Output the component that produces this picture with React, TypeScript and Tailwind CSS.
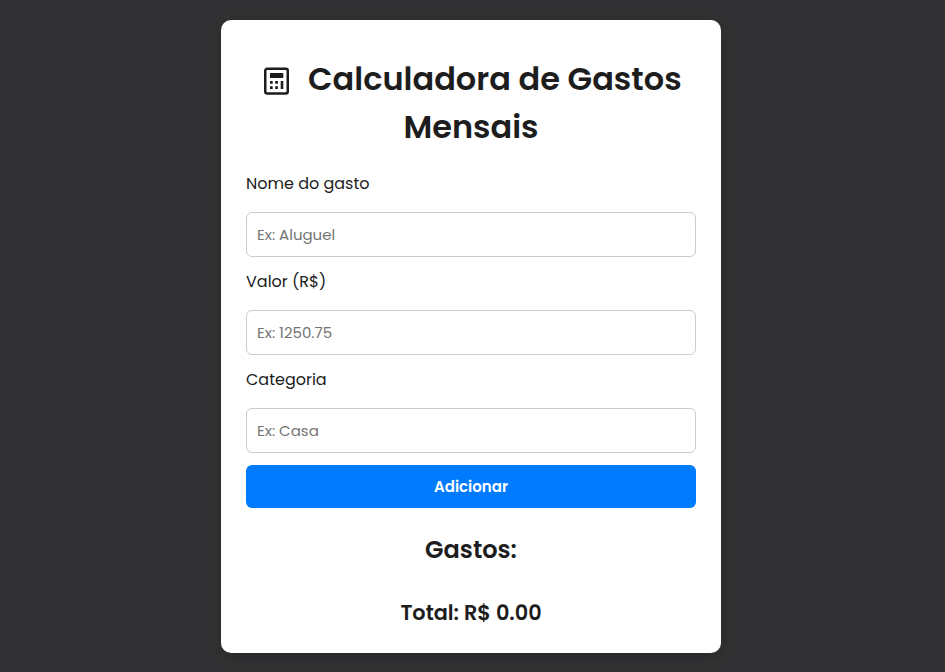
function CalculatorIcon() {
  return (
    <svg className="mt-3 h-7 w-[25px] shrink-0" viewBox="0 0 25 28" fill="none">
      <rect x="1.25" y="1.75" width="22.5" height="24.75" rx="2" stroke="#1d1d1d" strokeWidth="2.5" />
      <path fill="#1d1d1d" d="M6 6h13.3v5H6zM6 14h2.7v2.8H6zM11.2 14h2.7v2.8h-2.7zM6 19.2h2.7v2.8H6zM11.2 19.2h2.7v2.8h-2.7zM16.7 14h2.6v8h-2.6z" />
    </svg>
  );
}

type FieldProps = {
  id: string;
  label: string;
  placeholder: string;
};

function Field({ id, label, placeholder }: FieldProps) {
  return (
    <div className="mb-3">
      <label htmlFor={id} className="block h-[41px] pt-px text-base leading-6 whitespace-nowrap">
        {label}
      </label>
      <input
        id={id}
        placeholder={placeholder}
        className="block h-[45px] w-full rounded-md border border-[#cccccc] bg-white px-2.5 text-[15px] outline-none placeholder:text-[#757575]"
      />
    </div>
  );
}

export default function App() {
  return (
    <div className="flex min-h-screen items-start justify-center bg-[#323234] pt-5 pr-[3px] font-['Poppins','Inter',sans-serif] text-[#1d1d1d]">
      <main className="h-[633px] w-[500px] rounded-[10px] bg-white px-[25px] pt-[35px] shadow-[0_4px_15px_rgba(0,0,0,0.2)]">
        <h1 className="mb-5 text-center text-[32px] leading-[48px] font-semibold whitespace-nowrap">
          <span className="flex gap-[19px] pl-[18px]">
            <CalculatorIcon />
            <span>Calculadora de Gastos</span>
          </span>
          <span className="block">Mensais</span>
        </h1>
        <form>
          <Field id="nome" label="Nome do gasto" placeholder="Ex: Aluguel" />
          <Field id="valor" label="Valor (R$)" placeholder="Ex: 1250.75" />
          <Field id="categoria" label="Categoria" placeholder="Ex: Casa" />
          <button type="button" className="block h-[43px] w-full rounded-md bg-[#007bff] pt-px text-[15px] font-semibold text-white">
            Adicionar
          </button>
        </form>
        <h2 className="mt-6 text-center text-2xl leading-9 font-semibold">Gastos:</h2>
        <h3 className="mt-[29px] text-center text-[20.8px] leading-[31px] font-semibold">Total: R$ 0.00</h3>
      </main>
    </div>
  );
}
